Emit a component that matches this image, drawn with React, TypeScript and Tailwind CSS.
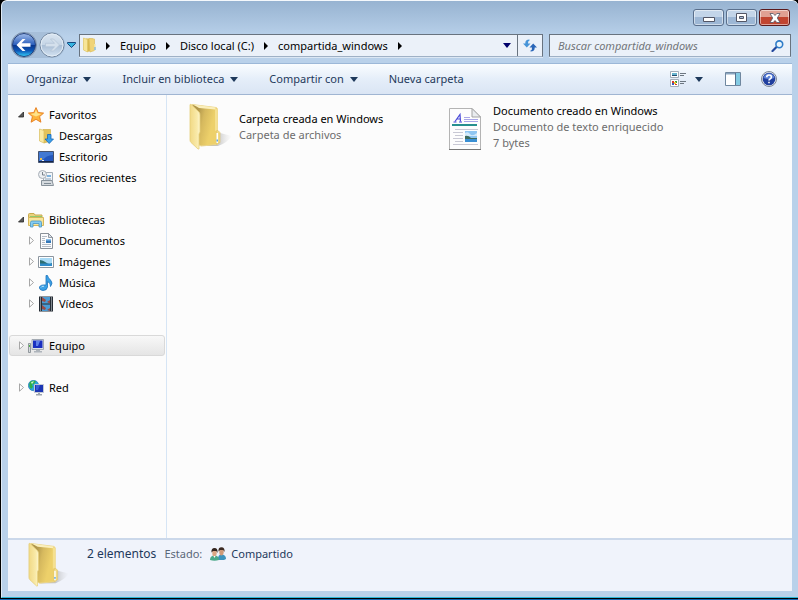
import type { ReactNode } from "react"

type IconProps = { className?: string }

function FolderIcon({ className }: IconProps) {
  return (
    <svg viewBox="0 0 44 48" className={className} aria-hidden="true">
      <defs>
        <linearGradient id="folderBack" x1="0" y1="0" x2="1" y2="0.4">
          <stop offset="0.25" stopColor="#b0964b" />
          <stop offset="0.5" stopColor="#d6b95e" />
          <stop offset="0.85" stopColor="#edd06a" />
        </linearGradient>
        <linearGradient id="folderFront" x1="0" y1="0" x2="1" y2="0">
          <stop offset="0" stopColor="#f1d985" />
          <stop offset="0.7" stopColor="#f9eaa9" />
          <stop offset="1" stopColor="#fdf6cf" />
        </linearGradient>
        <linearGradient id="folderShade" x1="0" y1="0" x2="1" y2="0">
          <stop offset="0" stopColor="#858585" stopOpacity="0.8" />
          <stop offset="0.5" stopColor="#a0a0a0" stopOpacity="0.6" />
          <stop offset="1" stopColor="#d0d0d0" stopOpacity="0" />
        </linearGradient>
      </defs>
      <path d="M13 43 L29 43 Q38 40 43 33 L31 30 Z" fill="url(#folderShade)" />
      <path d="M3 1.500 L27 4.500 Q28.500 5 28.500 6.500 L28.500 41.500 L12 43 L3 38 Z" fill="url(#folderBack)" stroke="#ecd68c" />
      <path d="M4 1.500 L26.500 4.500 V6.500 L10 5 Z" fill="#fbefbb" />
      <path d="M26 6 L28.500 6 V27 L26 28 Z" fill="#f5e08f" />
      <path d="M27.500 29 Q27.500 27 29 27.500 L31 29.500 V39.500 L27.500 41.500 Z" fill="#f1da83" stroke="#dfc369" strokeWidth="0.600" />
      <path d="M27.500 30 H29 V40 H27.500 Z" fill="#fff" />
      <path d="M27.500 36.500 H29 V38.500 H27.500 Z" fill="#5aa5ee" />
      <path d="M1 2 Q1 0.800 2.200 1.500 L10 9 Q11 10 11 12 L11 29 L10 31 L10 46 L9 46 L2 39.500 Q1 38.500 1 37 Z" fill="url(#folderFront)" stroke="#e6ce7a" strokeWidth="0.800" />
    </svg>
  )
}

function RichTextIcon({ className }: IconProps) {
  return (
    <svg viewBox="0 0 34 44" className={className} aria-hidden="true">
      <path d="M1.500 1.500 H24 L32.500 10 V42.500 H1.500 Z" fill="#fdfdfd" stroke="#b4b4b4" />
      <path d="M1 42.500 H33" stroke="#777" />
      <path d="M24 1.500 V10 H32.500 Z" fill="#e9ecef" stroke="#a3a3a3" />
      <path d="M7 14.500 L12 7.500 L12.500 14.500 M9 12 H12" fill="none" stroke="#4a4ad8" strokeWidth="1.200" />
      <path d="M5.500 15 H8.500 M11 15 H14" stroke="#4a4ad8" />
      <path d="M16 10.500 H22 M16 12.500 H30 M16 14.500 H30" stroke="#a9a6e8" />
      <path d="M4 18 H29" stroke="#27908f" strokeWidth="2" />
      <path d="M7 22.500 H30 M5 25.500 H15 M7 28.500 H15 M5 31.500 H15 M7 34.500 H15 M5 37.500 H30" stroke="#c8c8d4" />
      <path d="M17 24 H29 V35 H17 Z" fill="#8fc6f2" />
      <path d="M17 26 Q20 24 22 27 T29 26 V29 H17 Z" fill="#d3eafa" />
      <path d="M17 29 Q20 28 23 31 H29 V32 H17 Z" fill="#3f6c5d" />
      <path d="M17 32 H29 V35 H17 Z" fill="#3a8fd3" />
    </svg>
  )
}

function MiniFolder({ className }: IconProps) {
  return (
    <svg viewBox="0 0 16 16" className={className} aria-hidden="true">
      <path d="M4 1.500 L11 1.500 V13.500 L5 15 Z" fill="#d9b84f" />
      <path d="M7 1.500 L12.500 2 V13.500 L8 15 Z" fill="#f0d478" stroke="#dcbf5e" strokeWidth="0.700" />
      <path d="M1.500 1 L5.500 2.500 V15 L1.500 13 Z" fill="#f7e598" stroke="#e0c566" strokeWidth="0.700" />
      <path d="M12 7 H13.500 V13 L12 14 Z" fill="#f3e3a0" />
      <path d="M12.500 10 H13.500 V13 H12.500 Z" fill="#5ba8ed" />
    </svg>
  )
}

function StarIcon() {
  return (
    <svg viewBox="0 0 16 16" className="size-4" aria-hidden="true">
      <path d="M8 0.600 L10.200 5.500 L15.600 6.100 L11.600 9.600 L12.900 15.200 L8 12.300 L3.100 15.200 L4.400 9.600 L0.400 6.100 L5.800 5.500 Z" fill="#fdb43c" stroke="#e57b1c" strokeWidth="0.900" />
      <path d="M8 2.500 L9.500 6.300 L13.500 7 L8 9.500 L2.500 7 L6.500 6.300 Z" fill="#fee38b" />
    </svg>
  )
}

function DownloadsIcon() {
  return (
    <svg viewBox="0 0 16 16" className="size-4" aria-hidden="true">
      <path d="M5 1.500 L12.500 1.500 V13 L6 15 Z" fill="#e3c35b" stroke="#d0b04b" strokeWidth="0.700" />
      <path d="M1.500 1 L6 2.500 V15 L1.500 13 Z" fill="#f9eaa4" stroke="#d9bd5d" strokeWidth="0.700" />
      <path d="M9.500 6.500 H13 V11 H15.500 L11.200 15.500 L7 11 H9.500 Z" fill="#3aa0ea" stroke="#1667b5" strokeWidth="0.800" />
    </svg>
  )
}

function DesktopIcon() {
  return (
    <svg viewBox="0 0 16 16" className="size-4" aria-hidden="true">
      <path d="M0.500 2.500 H15.500 V13.500 H0.500 Z" fill="#2458bd" stroke="#44536f" />
      <path d="M1 3 H15 V6 Q8 6 4 12 H1 Z" fill="#4279d2" />
      <path d="M1 12 H15 V13 H1 Z" fill="#15264a" />
      <path d="M2 9 H4 V11 H2 Z" fill="#f1c24c" />
      <path d="M4 11 H6 V12 H4 Z" fill="#e9edf6" />
    </svg>
  )
}

function RecentIcon() {
  return (
    <svg viewBox="0 0 16 16" className="size-4" aria-hidden="true">
      <path d="M5.500 2.500 H14.500 V11.500 H5.500 Z" fill="#f3f6f9" stroke="#a3adb6" />
      <path d="M9 5 H13 V7 H9 Z" fill="#7fb2dd" />
      <path d="M7 9 H13" stroke="#8aa3bb" />
      <path d="M3.500 10.500 H14 L15.500 15.500 H3.500 Z" fill="#d5dade" stroke="#88929b" />
      <path d="M6 13.500 H13" stroke="#7f8a94" />
      <circle cx="4.500" cy="4.500" r="4" fill="#eceff2" stroke="#a7afb6" />
      <path d="M4.500 2 V5 H7" fill="none" stroke="#6d7781" strokeWidth="0.900" />
    </svg>
  )
}

function LibrariesIcon() {
  return (
    <svg viewBox="0 0 16 16" className="size-4" aria-hidden="true">
      <path d="M0.500 2.500 Q0.500 1.500 1.500 1.500 H6 L7 3 H14 V6 H0.500 Z" fill="#e9d27c" stroke="#c9a94f" />
      <path d="M2 4 H14 V5 H2 Z" fill="#8fca6e" />
      <path d="M0.500 5.500 H15.500 V13.500 H0.500 Z" fill="#f8e59b" stroke="#d6b75a" />
      <path d="M2.500 15 V10.500 Q2.500 9 4 9 H12 Q13.500 9 13.500 10.500 V15 H11 V11.500 H5 V15 Z" fill="#86cdf1" stroke="#4797c8" strokeWidth="0.800" />
    </svg>
  )
}

function DocumentsIcon() {
  return (
    <svg viewBox="0 0 16 16" className="size-4" aria-hidden="true">
      <path d="M2.500 0.500 H10.500 L14.500 4.500 V15.500 H2.500 Z" fill="#fcfcfd" stroke="#8a9199" />
      <path d="M10.500 0.500 V4.500 H14.500 Z" fill="#dfe5ec" stroke="#7f8790" strokeWidth="0.800" />
      <path d="M4 3.500 H9 M4 5.500 H7 M4 7.500 H7 M4 9.500 H7 M4 11.500 H13 M4 13.500 H13" stroke="#b3bbc5" />
      <path d="M8 6 H13 V10 H8 Z" fill="#3377b8" />
      <path d="M8 6 H13 V7.500 H8 Z" fill="#8fc1ea" />
    </svg>
  )
}

function PicturesIcon() {
  return (
    <svg viewBox="0 0 16 16" className="size-4" aria-hidden="true">
      <path d="M0.500 2.500 H15.500 V13.500 H0.500 Z" fill="#fff" stroke="#8b959f" />
      <path d="M2 4 H14 V12 H2 Z" fill="#a9daf5" />
      <path d="M2 6 Q5 6 8 8.500 T14 9 V10 H2 Z" fill="#2c6e72" />
      <path d="M2 9.500 H14 V12 H2 Z" fill="#2f8bc9" />
    </svg>
  )
}

function MusicIcon() {
  return (
    <svg viewBox="0 0 16 16" className="size-4" aria-hidden="true">
      <path d="M8 0.500 H9.500 Q10 3 12.500 5 Q15.500 8 12.500 11.500 Q13 8 9.500 6.500 V12 Q9 15.500 5 15.500 Q1 15 1.500 12 Q2.500 9.500 8 10 Z" fill="#3ba1e6" stroke="#1c74bd" strokeWidth="0.800" />
      <path d="M3 12.500 Q3.500 11 6 11.300" fill="none" stroke="#b5e0fa" />
    </svg>
  )
}

function VideosIcon() {
  return (
    <svg viewBox="0 0 16 16" className="size-4" aria-hidden="true">
      <path d="M1 0.500 H15 V15.500 H1 Z" fill="#262d35" />
      <path d="M4 1 H12 V7.500 H4 Z M4 8.500 H12 V15 H4 Z" fill="#4b9bd4" />
      <path d="M4 1 L8 4 L7 6 L4 5 Z M12 4 L9 6 L12 7.500 Z M4 9 L8 12 L7 14 L4 13 Z M12 12 L9 14 L12 15 Z" fill="#9b4a44" />
      <path d="M2.500 1.500 V15 M13.500 1.500 V15" stroke="#dfe6ec" strokeDasharray="1 1" />
    </svg>
  )
}

function ComputerIcon() {
  return (
    <svg viewBox="0 0 16 16" className="size-4" aria-hidden="true">
      <path d="M0.500 5.500 H2.500 V14.500 H0.500 Z" fill="#d5d9dc" stroke="#7d858c" strokeWidth="0.800" />
      <path d="M1 7 H2 V9 H1 Z" fill="#53b34c" />
      <path d="M4 1.500 H15.500 V11.500 H4 Z" fill="#dce0e6" stroke="#a2a9b2" />
      <path d="M5 2.500 H14.500 V10 H5 Z" fill="#1a2fc0" />
      <path d="M8 3 H12 L10 8 H8 Z" fill="#5f7fe8" />
      <path d="M8 12 H12 V13 H14 V14.500 H6 V13 H8 Z" fill="#aeb4bb" />
    </svg>
  )
}

function NetworkIcon() {
  return (
    <svg viewBox="0 0 16 16" className="size-4" aria-hidden="true">
      <circle cx="5.500" cy="5.500" r="5.200" fill="#2aa3e2" stroke="#2276ac" strokeWidth="0.600" />
      <path d="M2 2 Q5 0 8 1.500 L6 4 L4 4.500 L5 7 L3 9 Q0 6 2 2 Z" fill="#2fae4a" />
      <path d="M3 2.500 Q4 1 6 1.500 L4 4 Z" fill="#d5f4d3" />
      <path d="M6.500 4.500 H15.500 V12.500 H6.500 Z" fill="#1b35b4" stroke="#c2c9d4" />
      <path d="M8 5 H12 L10 10 H8 Z" fill="#3a5cd6" />
      <path d="M10 13 H12 V14 H14 V15.500 H8 V14 H10 Z" fill="#9da5ae" />
    </svg>
  )
}

function PeopleIcon() {
  return (
    <svg viewBox="0 0 16 14" className="h-3.5 w-4" aria-hidden="true">
      <path d="M8 13 Q7.500 7.500 11.500 7.500 Q16 7.500 16 12 L14 13 Z" fill="#3d93bd" />
      <path d="M9.300 3 H13.700 V6 Q13 8.500 11.500 8.500 Q9.500 8.500 9.300 6 Z" fill="#cf9a78" />
      <path d="M8.500 4.500 Q8 0.200 11.500 0.200 Q15 0.200 14.500 5 L13.300 3 H10 Z" fill="#3d2a22" />
      <path d="M0 13 Q0 8.500 4.500 8.500 Q9 8.500 9 13 Q4.500 14.500 0 13 Z" fill="#4ca98a" />
      <path d="M2.300 4 H6.700 V7 Q6 9.500 4.500 9.500 Q2.500 9.500 2.300 7 Z" fill="#dba684" />
      <path d="M1.500 5.500 Q1 1 4.500 1 Q8 1 7.500 6 L6.300 4 H3 Z" fill="#33241e" />
      <path d="M3.500 9 L4.500 11 L5.500 9 Z" fill="#fff" />
    </svg>
  )
}

function DownArrow({ className = "text-[#1e395b]" }: IconProps) {
  return (
    <svg viewBox="0 0 8 5" className={`h-[5px] w-2 shrink-0 ${className}`} aria-hidden="true">
      <path d="M0 0 H8 L4 5 Z" fill="currentColor" />
    </svg>
  )
}

function CrumbArrow() {
  return (
    <svg viewBox="0 0 4 8" className="h-2 w-1 shrink-0" aria-hidden="true">
      <path d="M0 0 L4 4 L0 8 Z" fill="#000" />
    </svg>
  )
}

function Twisty({ open }: { open: boolean }) {
  return (
    <svg viewBox="0 0 7 9" className="h-[9px] w-[7px]" aria-hidden="true">
      {open ? (
        <path d="M5.500 2 V7 H0.500 Z" fill="#595959" stroke="#262626" strokeWidth="0.800" />
      ) : (
        <path d="M1.500 0.800 L5.500 4.500 L1.500 8.200 Z" fill="#fff" stroke="#a6a6a6" />
      )}
    </svg>
  )
}

interface TreeItem {
  label: string
  icon: ReactNode
  open?: boolean
  selected?: boolean
  children?: { label: string; icon: ReactNode; expandable?: boolean }[]
}

const tree: TreeItem[] = [
  {
    label: "Favoritos",
    icon: <StarIcon />,
    open: true,
    children: [
      { label: "Descargas", icon: <DownloadsIcon /> },
      { label: "Escritorio", icon: <DesktopIcon /> },
      { label: "Sitios recientes", icon: <RecentIcon /> },
    ],
  },
  {
    label: "Bibliotecas",
    icon: <LibrariesIcon />,
    open: true,
    children: [
      { label: "Documentos", icon: <DocumentsIcon />, expandable: true },
      { label: "Imágenes", icon: <PicturesIcon />, expandable: true },
      { label: "Música", icon: <MusicIcon />, expandable: true },
      { label: "Vídeos", icon: <VideosIcon />, expandable: true },
    ],
  },
  { label: "Equipo", icon: <ComputerIcon />, selected: true },
  { label: "Red", icon: <NetworkIcon /> },
]

const files = [
  {
    name: "Carpeta creada en Windows",
    details: ["Carpeta de archivos"],
    icon: <FolderIcon className="h-12 w-11" />,
  },
  {
    name: "Documento creado en Windows",
    details: ["Documento de texto enriquecido", "7 bytes"],
    icon: <RichTextIcon className="mt-1 h-11 w-[34px]" />,
  },
]

const crumbs = ["Equipo", "Disco local (C:)", "compartida_windows"]

function WindowButtons() {
  const base = "flex h-[17px] w-[31px] items-center justify-center rounded-[3px] border shadow-[inset_0_0_0_1px_rgba(255,255,255,0.5)]"
  const plain = "border-[#5a6f8c] bg-linear-to-b from-[#c3d5e9] from-50% to-[#9db7d5] to-50%"
  return (
    <div className="flex gap-0.5">
      <button aria-label="Minimizar" className={`${base} ${plain}`}>
        <svg viewBox="0 0 12 5" className="mt-1 h-[5px] w-3">
          <path d="M0.500 0.500 H11.500 V4.500 H0.500 Z" fill="#fff" stroke="#535666" />
        </svg>
      </button>
      <button aria-label="Maximizar" className={`${base} ${plain}`}>
        <svg viewBox="0 0 11 9" className="h-[9px] w-[11px]">
          <path d="M0.500 0.500 H10.500 V8.500 H0.500 Z" fill="#fff" stroke="#535666" />
          <path d="M3.500 3.500 H7.500 V5.500 H3.500 Z" fill="#a9bfd8" stroke="#535666" />
        </svg>
      </button>
      <button
        aria-label="Cerrar"
        className={`${base} border-[#5b1a1c] bg-linear-to-b from-[#e0a093] from-50% to-[#c14430] to-50%`}
      >
        <svg viewBox="0 0 12 10" className="h-2.5 w-3">
          <path d="M1 0.500 H4.200 L6 2.500 L7.800 0.500 H11 L8.300 5 L11 9.500 H7.800 L6 7.500 L4.200 9.500 H1 L3.700 5 Z" fill="#fff" stroke="#535666" strokeWidth="0.800" />
        </svg>
      </button>
    </div>
  )
}

function NavButtons() {
  return (
    <div className="flex h-[26px] items-center">
      <div className="flex items-center gap-0.5 rounded-full bg-[#a7bfd9]">
        <button aria-label="Atrás">
          <svg viewBox="0 0 26 26" className="size-[26px]">
            <defs>
              <linearGradient id="back" x1="0" y1="0" x2="0" y2="1">
                <stop offset="0" stopColor="#a0bbe9" />
                <stop offset="0.480" stopColor="#2c60bd" />
                <stop offset="0.500" stopColor="#08348c" />
                <stop offset="0.750" stopColor="#0d58b8" />
                <stop offset="1" stopColor="#36d2fa" />
              </linearGradient>
            </defs>
            <circle cx="13" cy="13" r="12.500" fill="#dce8f4" stroke="#7389a5" />
            <circle cx="13" cy="13" r="11.500" fill="url(#back)" stroke="#23407b" />
            <path d="M5.500 13 L11.500 7 H14.500 L10.500 11.300 H19.500 V14.700 H10.500 L14.500 19 H11.500 Z" fill="#fff" />
          </svg>
        </button>
        <button aria-label="Adelante">
          <svg viewBox="0 0 26 26" className="size-[26px]">
            <defs>
              <linearGradient id="forward" x1="0" y1="0" x2="0" y2="1">
                <stop offset="0" stopColor="#dbe6f1" />
                <stop offset="0.490" stopColor="#c5d5e6" />
                <stop offset="0.510" stopColor="#a9bed5" />
                <stop offset="1" stopColor="#d5e4f3" />
              </linearGradient>
            </defs>
            <circle cx="13" cy="13" r="12" fill="url(#forward)" stroke="#73879f" />
            <circle cx="13" cy="13" r="11" fill="none" stroke="#e3edf6" />
            <path d="M20.500 13 L14.500 7 H11.500 L15.500 11.300 H6.500 V14.700 H15.500 L11.500 19 H14.500 Z" fill="#d4e0ec" stroke="#b2c3d6" strokeWidth="0.700" />
          </svg>
        </button>
      </div>
      <button aria-label="Páginas recientes" className="ml-0.5">
        <svg viewBox="0 0 9 6" className="h-1.5 w-[9px]">
          <path d="M0.500 0.500 H8.500 V1.500 L4.500 5.500 L0.500 1.500 Z" fill="#35b4e0" stroke="#17477d" />
        </svg>
      </button>
    </div>
  )
}

function AddressBar() {
  return (
    <div className="flex h-[23px] flex-1 border border-[#68737f] border-b-[#9fb1c6] bg-[#ebf1f9] shadow-[0_1px_0_#dbe7f4]">
      <MiniFolder className="mt-0.5 ml-0.5 size-4 shrink-0" />
      <nav aria-label="Ruta" className="ml-2 flex flex-1 items-center gap-2.5">
        <CrumbArrow />
        {crumbs.map((crumb) => (
          <button key={crumb} className="flex items-center gap-2.5">
            <span>{crumb}</span>
            <CrumbArrow />
          </button>
        ))}
      </nav>
      <button aria-label="Ubicaciones anteriores" className="px-1.5">
        <DownArrow className="text-[#00006b]" />
      </button>
      <button aria-label="Actualizar" className="flex w-[25px] items-center justify-center border-l border-[#68737f]">
        <svg viewBox="0 0 14 13" className="h-[13px] w-3.5">
          <path d="M6.500 0.500 Q2 0.500 2.300 4.500 H0 L3.800 8.500 L7.500 4.500 H5 Q4.700 2 6.500 1.500 Z" fill="#4694d8" />
          <path d="M7.500 12.500 Q12 12.500 11.700 8.500 H14 L10.200 4.500 L6.500 8.500 H9 Q9.300 11 7.500 11.500 Z" fill="#2a66b8" />
        </svg>
      </button>
    </div>
  )
}

function SearchBox() {
  return (
    <div className="flex h-[23px] w-[242px] items-center border border-[#68737f] border-b-[#9fb1c6] bg-[#ebf1f9] pr-1.5 pl-2 shadow-[0_1px_0_#dbe7f4]">
      <input
        type="text"
        aria-label="Buscar"
        placeholder="Buscar compartida_windows"
        className="min-w-0 flex-1 bg-transparent italic outline-none placeholder:text-[#727579]"
      />
      <svg viewBox="0 0 13 12" className="h-3 w-[13px]" aria-hidden="true">
        <path d="M5.500 7 L1.500 11" stroke="#23489c" strokeWidth="2.200" strokeLinecap="round" />
        <circle cx="8.300" cy="4.300" r="3.400" fill="#eaf5fc" stroke="#2f7cc8" strokeWidth="1.600" />
      </svg>
    </div>
  )
}

function Toolbar() {
  return (
    <div className="flex h-8 shrink-0 items-center border-y border-t-[#9cb8d8] border-b-[#a0b5d2] bg-linear-to-b from-[#fafdff] via-[#e5eef9] to-[#dae5f4] pr-[15px] pl-[18px] text-[#1e395b]">
      <div className="flex flex-1 items-center gap-[31px]">
        <button className="flex items-center gap-1.5">
          Organizar <DownArrow />
        </button>
        <button className="flex items-center gap-1.5">
          Incluir en biblioteca <DownArrow />
        </button>
        <button className="flex items-center gap-1.5">
          Compartir con <DownArrow />
        </button>
        <button>Nueva carpeta</button>
      </div>
      <button aria-label="Cambiar la vista">
        <svg viewBox="0 0 16 16" className="size-4">
          <path d="M0.500 0.500 H8.500 V6.500 H0.500 Z M0.500 8.500 H8.500 V15.500 H0.500 Z" fill="#fff" stroke="#a3adb9" />
          <path d="M2 2 H7 V5 H2 Z" fill="#67b4cf" />
          <path d="M2 4 H7 V5 H2 Z" fill="#224b70" />
          <path d="M2 10 H4 V12 H2 Z" fill="#d43b2b" />
          <path d="M5 10 H7 V12 H5 Z" fill="#3b9a3f" />
          <path d="M2 12 H4 V14 H2 Z" fill="#3b58c0" />
          <path d="M4 11 H6 V13 H4 Z" fill="#f1c92d" />
          <path d="M5 13 H7 V14 H5 Z" fill="#d43b2b" />
          <path d="M10 2.500 H16 M10 4.500 H14 M10 10.500 H16 M10 12.500 H14" stroke="#6c7681" />
        </svg>
      </button>
      <button aria-label="Más opciones" className="ml-[9px]">
        <DownArrow />
      </button>
      <button aria-label="Panel de vista previa" className="ml-[22px]">
        <svg viewBox="0 0 16 14" className="h-3.5 w-4">
          <path d="M0.500 0.500 H15.500 V13.500 H0.500 Z" fill="#fff" stroke="#6f879f" />
          <path d="M1 1 H15 V2.500 H1 Z" fill="#8ba6c0" />
          <path d="M11 1 H15 V13 H11 Z" fill="#84cbe3" />
          <path d="M10.500 1 V13" stroke="#56718f" />
        </svg>
      </button>
      <button aria-label="Obtener ayuda" className="ml-5">
        <svg viewBox="0 0 16 16" className="size-4">
          <circle cx="8" cy="8" r="7.500" fill="#e3e7ee" stroke="#7d8797" />
          <circle cx="8" cy="8" r="6.300" fill="#213f9e" />
          <path d="M2.500 7 A5.600 5.600 0 0 1 13.500 7 Q8 9 2.500 7 Z" fill="#5e83d6" />
          <path d="M5.700 6.300 Q5.700 4 8 4 Q10.400 4 10.400 6 Q10.400 7.200 9 8 Q8 8.500 8 9.500" fill="none" stroke="#fff" strokeWidth="1.600" />
          <path d="M7.200 10.700 H8.800 V12.300 H7.200 Z" fill="#fff" />
        </svg>
      </button>
    </div>
  )
}

function Sidebar() {
  return (
    <aside className="w-[159px] shrink-0 border-r border-[#d6e5f5] px-px pt-[9px]">
      <ul className="space-y-[21px]">
        {tree.map((item) => (
          <li key={item.label}>
            <button
              className={`flex h-[21px] w-full items-center rounded-[3px] border pl-2 ${
                item.selected
                  ? "border-[#d9d9d9] bg-linear-to-b from-[#f8f8f8] to-[#e5e5e5]"
                  : "border-transparent"
              }`}
            >
              <Twisty open={!!item.open} />
              <span className="mr-[5px] ml-[3px]">{item.icon}</span>
              {item.label}
            </button>
            {item.children?.map((child) => (
              <button key={child.label} className="flex h-[21px] w-full items-center pl-[19px]">
                <span className="w-[7px]">{child.expandable && <Twisty open={false} />}</span>
                <span className="mr-[5px] ml-[3px]">{child.icon}</span>
                {child.label}
              </button>
            ))}
          </li>
        ))}
      </ul>
    </aside>
  )
}

function FileTile({ file }: { file: (typeof files)[number] }) {
  return (
    <button className="flex h-12 w-[254px] items-center gap-1 text-left">
      <span className="flex w-12 shrink-0 justify-center">{file.icon}</span>
      <span className="whitespace-nowrap">
        <span className="block">{file.name}</span>
        {file.details.map((line) => (
          <span key={line} className="block text-[#6d6d6d]">
            {line}
          </span>
        ))}
      </span>
    </button>
  )
}

export default function App() {
  return (
    <div className="flex min-h-screen flex-col border-b border-[#1464b4] bg-black pl-px font-['Noto_Sans','Open_Sans',sans-serif] text-[11px] leading-4 text-black">
      <div className="mb-px flex flex-1 flex-col rounded-t-md border border-r-0 border-t-[#f4f8fc] border-b-[#2fb7d6] border-l-[#dfeaf5] bg-[#b9d1ea] bg-linear-to-b from-[#97b3d1] to-[#b9d1ea] to-[36px] pr-1.5 pb-1.5 pl-1.5">
        <header className="flex h-[31px] shrink-0 justify-end pt-2 pr-0.5">
          <WindowButtons />
        </header>
        <div className="flex h-[31px] shrink-0 items-start gap-[3px] pr-px pl-[3px]">
          <NavButtons />
          <div className="flex flex-1 gap-1.5 pt-0.5">
            <AddressBar />
            <SearchBox />
          </div>
        </div>
        <Toolbar />
        <main className="flex flex-1 bg-[#fcfcfc]">
          <Sidebar />
          <section aria-label="Archivos" className="flex flex-1 flex-wrap content-start pt-2 pl-5">
            {files.map((file) => (
              <FileTile key={file.name} file={file} />
            ))}
          </section>
        </main>
        <footer className="flex h-[53px] shrink-0 border-t-2 border-[#cbd8ea] bg-[#f0f3fb] pl-5 text-[#1e395b]">
          <FolderIcon className="mt-0.5 h-[46px] w-[42px]" />
          <div className="flex h-7 items-center gap-2 pl-[17px]">
            <span className="text-[12px]">2 elementos</span>
            <span className="text-[#5a6779]">Estado:</span>
            <span className="flex items-center gap-[5px]">
              <PeopleIcon />
              Compartido
            </span>
          </div>
        </footer>
      </div>
    </div>
  )
}
